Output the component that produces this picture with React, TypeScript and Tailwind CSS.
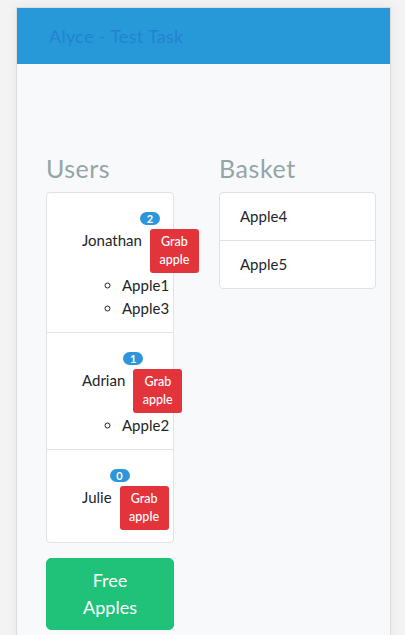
import React from "react";

type User = { name: string; apples: string[] };

const users: User[] = [
  { name: "Jonathan", apples: ["Apple1", "Apple3"] },
  { name: "Adrian", apples: ["Apple2"] },
  { name: "Julie", apples: [] },
];

const basket = ["Apple4", "Apple5"];

function UserItem({ user, last }: { user: User; last: boolean }) {
  return (
    <li className={`pl-[35px] pt-[36px] pb-[12.5px] ${last ? "" : "border-b border-[#dfe3e6]"}`}>
      <div className="flex items-baseline">
        <span className="relative text-[15px] leading-[22.5px] text-[#212529] whitespace-nowrap">
          {user.name}
          <span className="absolute left-[-2px] ml-[100%] top-[-17px] h-[13px] w-[20px] rounded-full bg-[#2d96db] text-white text-[11px] font-bold leading-[13px] text-center">
            {user.apples.length}
          </span>
        </span>
        <button className="ml-[8px] shrink-0 w-[49px] rounded-[3px] bg-[#e3333b] py-[4px] text-[12.5px] leading-[18px] font-medium text-white text-center">
          Grab
          <br />
          apple
        </button>
      </div>
      {user.apples.length > 0 && (
        <ul className="mt-px pl-[40px] list-[circle] text-[15px] leading-[22.5px] text-[#212529]">
          {user.apples.map((a) => (
            <li key={a}>{a}</li>
          ))}
        </ul>
      )}
    </li>
  );
}

export default function App() {
  return (
    <div
      className="min-h-[635px] bg-[#f3f3f3] pt-[7px] pl-[16px] pr-[14px] overflow-hidden"
      style={{ fontFamily: "Lato, 'Noto Sans', sans-serif" }}
    >
      <div className="h-[640px] border border-[#dcdcdc] bg-[#f8f9fb] shadow-[0_0_10px_rgba(0,0,0,0.06)]">
        <header className="h-[56px] bg-[#2899d8] flex items-center pl-[32px]">
          <h1 className="text-[18px] font-normal text-[#2183d0] tracking-[0.3px]">Alyce - Test Task</h1>
        </header>

        <div className="flex pt-[89px] pl-[29px] gap-[45px]">
          <section className="w-[128px]">
            <h2 className="text-[25px] leading-[30px] mb-[9px] text-[#95a5a6] tracking-[0.5px]">Users</h2>
            <ul className="bg-white border border-[#dfe3e6] rounded-[4px]">
              {users.map((u, i) => (
                <UserItem key={u.name} user={u} last={i === users.length - 1} />
              ))}
            </ul>
            <button className="mt-[15px] w-full rounded-[5px] border border-[#20c27a] bg-[#20c27a] py-[8px] text-[18px] leading-[27px] text-white text-center">
              Free
              <br />
              Apples
            </button>
          </section>

          <section className="w-[157px]">
            <h2 className="text-[25px] leading-[30px] mb-[9px] text-[#95a5a6] tracking-[0.6px]">Basket</h2>
            <ul className="bg-white border border-[#dfe3e6] rounded-[4px]">
              {basket.map((a, i) => (
                <li
                  key={a}
                  className={`px-[20px] py-[12px] text-[15px] leading-[23px] text-[#212529] ${
                    i < basket.length - 1 ? "border-b border-[#dfe3e6]" : ""
                  }`}
                >
                  {a}
                </li>
              ))}
            </ul>
          </section>
        </div>
      </div>
    </div>
  );
}
